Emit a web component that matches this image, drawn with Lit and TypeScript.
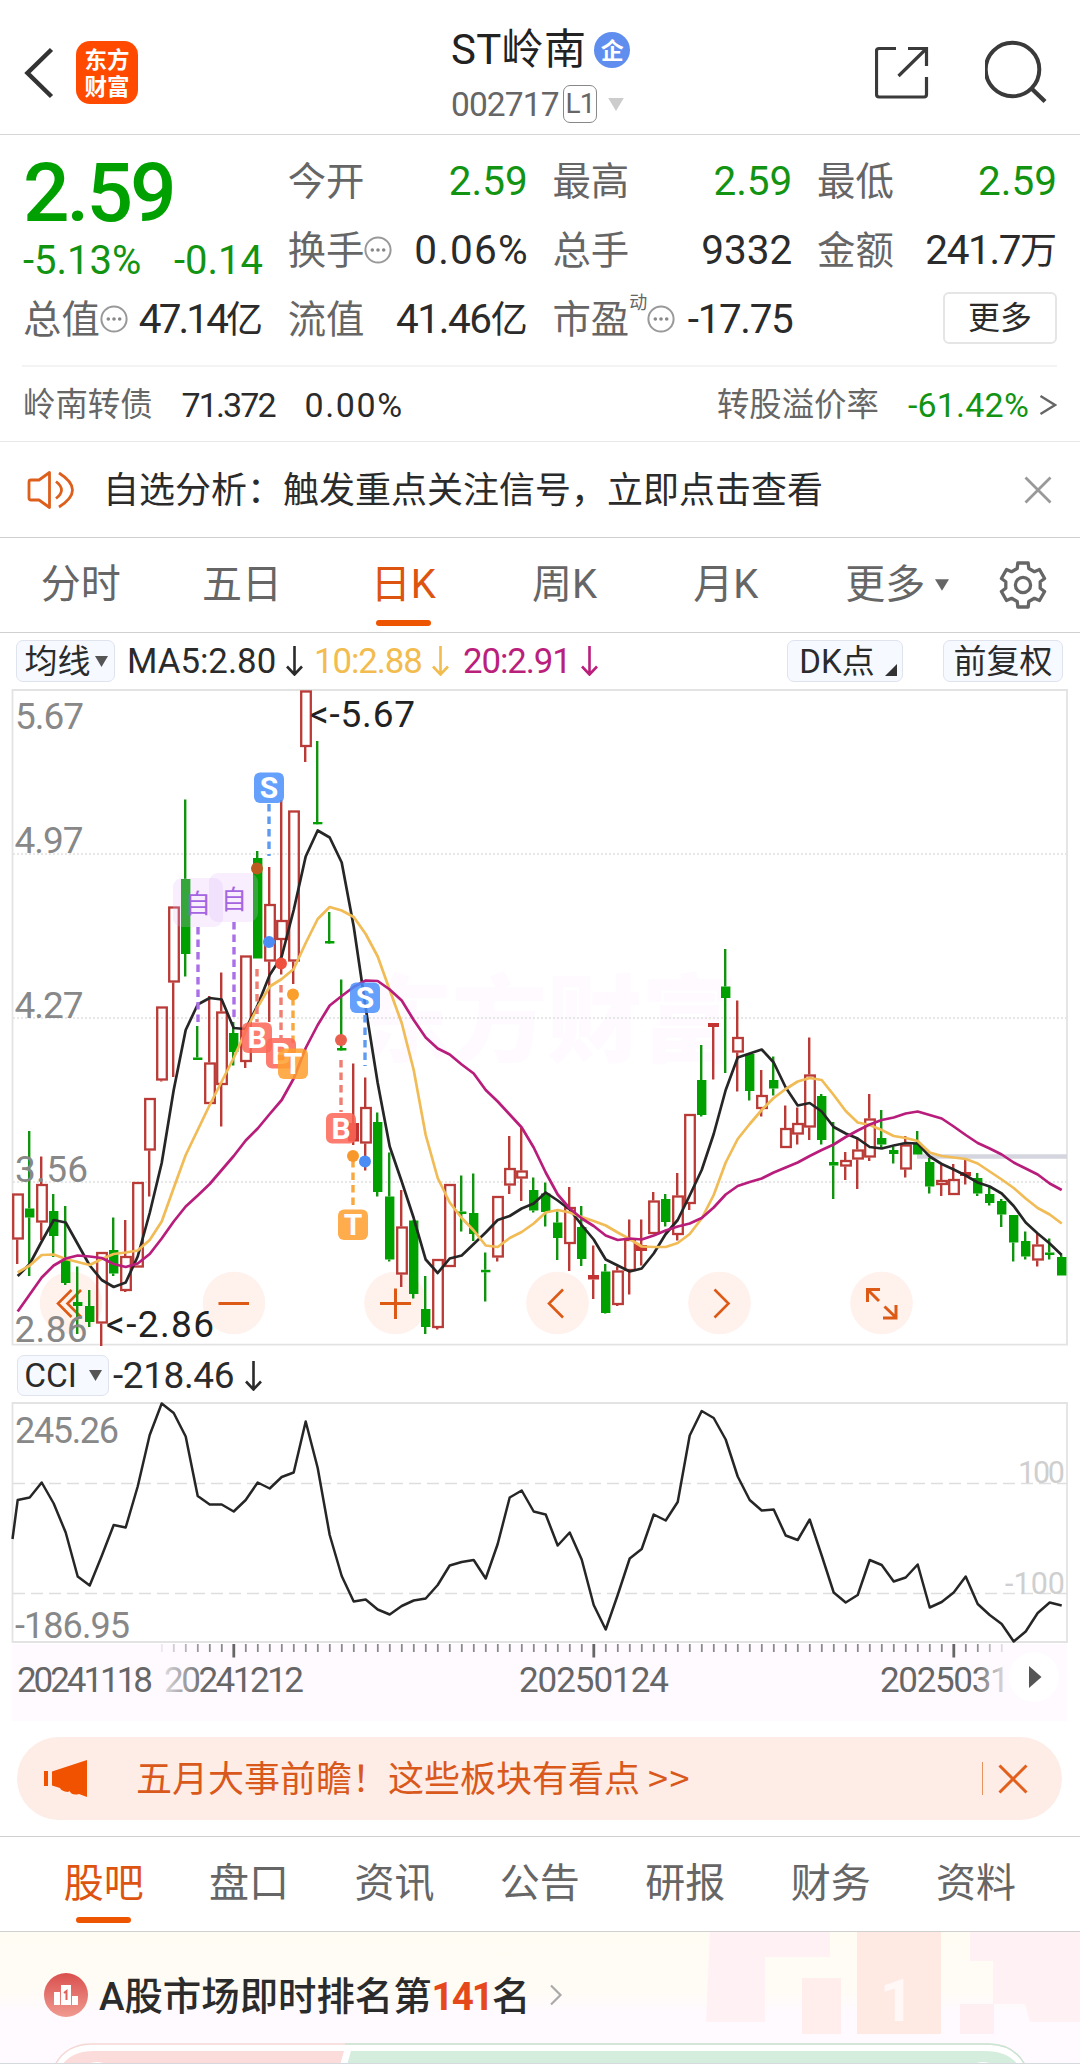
import { LitElement, html, svg, css } from "lit";
import { customElement } from "lit/decorators.js";
import { classMap } from "lit/directives/class-map.js";

const STEP = 12;
const X0 = 17.2;
const cx = (i: number) => X0 + STEP * i;

/* kind, body top, body bottom, high, low (R hollow, F solid red, G solid green) */
type Candle = [string, number, number, number, number];
const candles: Candle[] = [
  ["R", 1193.5, 1239.5, 1193.5, 1264], ["G", 1208.5, 1217.5, 1131, 1276], ["R", 1184, 1222.5, 1156.5, 1240],
  ["G", 1211, 1236, 1194, 1257], ["G", 1260, 1283, 1206, 1285], ["G", 1302, 1306, 1266.5, 1334],
  ["G", 1306, 1322, 1290, 1327], ["R", 1252, 1323.5, 1252, 1346], ["G", 1250, 1273.5, 1217.5, 1276],
  ["R", 1256, 1291, 1220, 1292], ["R", 1182, 1267.5, 1182, 1267.5], ["R", 1098, 1150.5, 1098, 1196.5],
  ["R", 1006.5, 1080.5, 1006.5, 1081.5], ["R", 906.5, 982.5, 906.5, 1077], ["G", 879, 954, 799.5, 976.5],
  ["G", 1057.5, 1060, 1026, 1060], ["R", 1062.5, 1104, 996, 1104], ["R", 1011.5, 1085, 972.5, 1126.5],
  ["G", 1033, 1052, 1022, 1065.5], ["R", 955.5, 1062, 955.5, 1068], ["G", 858, 958.5, 851, 958.5],
  ["R", 904, 961.5, 867, 1022], ["R", 920, 940, 800, 974.5], ["R", 810.5, 961.5, 810.5, 984],
  ["R", 690.5, 747, 690.5, 762], ["G", 822, 824.3, 741, 824], ["G", 941, 943.5, 912, 943],
  ["G", 1048, 1050.5, 979.5, 1050], ["F", 1123, 1141.5, 1063.5, 1145], ["R", 1107, 1143.5, 1077.5, 1170.5],
  ["G", 1122, 1192, 1112.5, 1196.5], ["G", 1196.5, 1259.5, 1152.5, 1261.5], ["R", 1226.5, 1274.5, 1190, 1287],
  ["G", 1220.5, 1294, 1220, 1298.5], ["G", 1309, 1327, 1276, 1334], ["R", 1259, 1328, 1259, 1329.5],
  ["R", 1184, 1267, 1184, 1267], ["G", 1211.5, 1214, 1175.5, 1231.5], ["G", 1213, 1234, 1173.5, 1241],
  ["G", 1269.8, 1272.3, 1252.5, 1301.5], ["R", 1196, 1257.5, 1196, 1261.5], ["R", 1168, 1185.5, 1136, 1194],
  ["R", 1170.5, 1178.5, 1127.5, 1201], ["G", 1190, 1210.5, 1177.5, 1212.5], ["G", 1193.5, 1212, 1182.5, 1226.5],
  ["G", 1222.5, 1238, 1211.5, 1260], ["R", 1207, 1244, 1187, 1271], ["G", 1227, 1259, 1206, 1266],
  ["F", 1275, 1279.5, 1245.5, 1299], ["G", 1271.5, 1313, 1264, 1313.5], ["R", 1270.5, 1305, 1266.5, 1306],
  ["R", 1239, 1271, 1219.5, 1294.5], ["F", 1245, 1251, 1219.5, 1265.5], ["R", 1200.5, 1234, 1192, 1234],
  ["G", 1199, 1222, 1194, 1226.5], ["R", 1195.5, 1235, 1173, 1240.5], ["R", 1114, 1204, 1114, 1210],
  ["G", 1080, 1115, 1045, 1116.5], ["F", 1023, 1027, 1023, 1079.5], ["G", 986.5, 998, 949, 1073],
  ["R", 1037, 1052.5, 1000.5, 1091.5], ["G", 1054, 1091, 1053, 1100.5], ["R", 1095, 1109, 1070, 1116.5],
  ["G", 1080, 1088.5, 1056.5, 1095.5], ["R", 1128, 1148, 1105.5, 1148], ["R", 1123, 1134.5, 1107.5, 1144.5],
  ["R", 1074.5, 1127.5, 1037.5, 1140], ["G", 1096, 1140, 1094, 1144.5], ["G", 1162, 1165.5, 1122, 1199],
  ["R", 1160, 1166.5, 1152, 1180], ["R", 1149.5, 1159.5, 1138, 1189], ["R", 1118.5, 1157.5, 1094, 1161],
  ["G", 1138, 1144.5, 1110, 1148], ["G", 1150, 1154, 1147, 1163.5], ["R", 1144.5, 1169.5, 1136, 1177.5],
  ["G", 1144, 1154.5, 1131, 1154.5], ["G", 1162, 1186.5, 1158, 1193.5], ["R", 1180, 1185, 1165, 1196],
  ["R", 1179, 1195, 1164, 1195], ["F", 1172, 1176, 1160, 1184.5], ["G", 1178, 1193.5, 1173, 1196],
  ["G", 1194, 1203, 1186.5, 1205.5], ["G", 1201, 1214.5, 1199, 1227], ["G", 1215, 1242.5, 1215, 1261.5],
  ["G", 1241, 1256.5, 1231.5, 1259.5], ["R", 1244.5, 1260.5, 1234, 1266.5], ["G", 1252.5, 1255, 1238.5, 1259.5],
  ["G", 1257, 1275.5, 1255, 1275.5],
];

const ma5 = [1276, 1264, 1241.5, 1220, 1222.5, 1244, 1265.5, 1280, 1287, 1282.5, 1256.5, 1213, 1163, 1090, 1030,
  1004.5, 998, 999.5, 1028, 1029, 1005, 975, 956.5, 910, 856.5, 830.5, 837.5, 862.5, 926.5, 1008, 1083, 1146.5,
  1181.5, 1218, 1259.5, 1273, 1258.5, 1255.5, 1244, 1232.5, 1220, 1216, 1208.5, 1203.5, 1192.5, 1200.5, 1209.5,
  1225, 1239.5, 1259.5, 1265.5, 1271.5, 1268.5, 1253.5, 1234, 1220, 1195.5, 1170, 1134, 1090, 1057.5, 1053.5,
  1049.5, 1062.5, 1087.5, 1105.5, 1103, 1111.5, 1127, 1133.5, 1138.5, 1147, 1148.5, 1145.5, 1143, 1143.5, 1156.5,
  1164, 1169.5, 1175.5, 1182.5, 1186.5, 1193.5, 1206, 1222.5, 1233.5, 1243.5, 1255];
const ma10 = [1272.5, 1265.5, 1255, 1254.5, 1259, 1262, 1265, 1259, 1254, 1252.5, 1250.5, 1240, 1221.5, 1188, 1155,
  1130, 1105, 1081.5, 1058, 1031, 1007, 986.5, 979, 969, 943, 919, 907, 910.5, 917, 934, 956.5, 990, 1023, 1070,
  1135, 1178, 1202.5, 1218, 1230.5, 1245.5, 1247, 1238, 1232, 1223.5, 1212.5, 1210, 1212.5, 1217, 1221, 1225.5,
  1232.5, 1239, 1246.5, 1247, 1247, 1243, 1234, 1218.5, 1195, 1162.5, 1139, 1124, 1110, 1098, 1089, 1081.5, 1078,
  1080, 1095, 1111, 1122.5, 1125, 1130, 1136, 1138, 1141, 1152.5, 1156, 1157.5, 1159, 1163.5, 1171.5, 1179.5,
  1188, 1198.5, 1208, 1214.5, 1223.5];
const ma20 = [1311.5, 1294.5, 1277.5, 1265.5, 1258.5, 1255.5, 1256.5, 1258, 1264, 1267, 1263.5, 1254, 1238.5,
  1221.5, 1206.5, 1195.5, 1184, 1170, 1156, 1140.5, 1128.5, 1114, 1100, 1078.5, 1048, 1025, 1005.5, 996, 987,
  980.5, 981, 989.5, 1000.5, 1020, 1037.5, 1048.5, 1054.5, 1064.5, 1073.5, 1090, 1101.5, 1114.5, 1127.5, 1147.5,
  1172.5, 1194.5, 1208.5, 1218.5, 1226, 1235.5, 1240, 1238.5, 1239.5, 1235.5, 1230.5, 1226.5, 1223.5, 1218,
  1207.5, 1194.5, 1186, 1182, 1178.5, 1172.5, 1167.5, 1162.5, 1156, 1150, 1144.5, 1137, 1130.5, 1124.5, 1120,
  1117.5, 1113.5, 1111.5, 1115, 1118.5, 1126.5, 1135, 1143, 1148.5, 1154.5, 1162.5, 1168.5, 1174.5, 1183.5, 1190];
const cci = [1500, 1497.5, 1482.5, 1503.5, 1532.5, 1576.5, 1585.5, 1556, 1525, 1527.5, 1486.5, 1435, 1403.5, 1413,
  1436.5, 1496, 1504.5, 1504.5, 1511.5, 1500, 1482.5, 1488.5, 1477, 1472.5, 1421.5, 1468, 1535, 1576, 1601.5,
  1599.5, 1609.5, 1614.5, 1606, 1600.5, 1598.5, 1585, 1565.5, 1562, 1560, 1578.5, 1544, 1497.5, 1490.5, 1511.5,
  1514.5, 1545.5, 1532.5, 1559.5, 1605, 1629.5, 1595, 1558.5, 1549, 1514.5, 1520.5, 1502, 1435.5, 1411, 1418,
  1439.5, 1476.5, 1500, 1510.5, 1509.5, 1535.5, 1540, 1519.5, 1555.5, 1592.5, 1602.5, 1595, 1560, 1565, 1581.5,
  1577.5, 1564.5, 1607.5, 1602, 1592.5, 1576.5, 1604, 1615, 1624, 1641.5, 1631.5, 1613, 1602.5, 1605.5];

const line = (ys: number[]) => ys.map((y, i) => `${cx(i) + 0.5},${y}`).join(" ");

const arrow = () => html`<svg class="arrow" width="17" height="30" viewBox="0 0 17 30">
  <path d="M8.5 0V28M1 20.5L8.5 28.5L16 20.5" fill="none" stroke="currentColor" stroke-width="2.6" /></svg>`;
const tri = (c: string) => html`<svg class=${c} viewBox="0 0 12 10"><path d="M0 0H12L6 10Z" fill="currentColor" /></svg>`;
const more = () => html`<svg class="dots" width="28" height="28" viewBox="0 0 28 28">
  <circle cx="14" cy="14" r="12.6" fill="none" stroke="#999" stroke-width="2" />
  <circle cx="8.3" cy="14" r="1.8" fill="#888" /><circle cx="14" cy="14" r="1.8" fill="#888" /><circle cx="19.7" cy="14" r="1.8" fill="#888" /></svg>`;

@customElement("app-root")
export class AppRoot extends LitElement {
  static styles = css`
    :host { display: block; width: 1080px; height: 2064px; overflow: hidden; background: #fff; color: #2b2b2b;
      font-family: Roboto, "Noto Sans CJK SC", sans-serif; }
    * { box-sizing: border-box; }
    svg { display: block; flex: none; }
    .page { display: flex; flex-direction: column; }
    .header { height: 135px; border-bottom: 1px solid #d6d6d6; display: grid; grid-template-columns: 451px 1fr 205px; }
    .left { display: flex; align-items: flex-start; padding: 41px 0 0 24px; gap: 22px; }
    .back { margin-top: 6px; }
    .logo { width: 62px; height: 63px; border-radius: 14px; background: #ff4a00; color: #fff; font: 700 22.5px/27px "Noto Sans CJK SC", sans-serif;
      display: flex; flex-direction: column; justify-content: center; align-items: center; padding-bottom: 2px; }
    .mid { display: flex; flex-direction: column; }
    .name { display: flex; align-items: center; height: 54px; margin-top: 23px; font-size: 42px; line-height: 54px; gap: 8px; color: #222; }
    .name .t { letter-spacing: 0.3px; }
    .ent { width: 36px; height: 36px; border-radius: 50%; background: #5f8eee; color: #fff; font: 700 23px/35px "Noto Sans CJK SC", sans-serif; text-align: center; }
    .code { display: flex; align-items: center; height: 40px; margin-top: 7px; font-size: 33.5px; color: #666; }
    .code .n { letter-spacing: -0.9px; width: 112px; }
    .l1 { width: 34px; height: 38px; border: 1.6px solid #888; border-radius: 7px; font-size: 28px; line-height: 35px; text-align: center; letter-spacing: -1px; }
    .t1 { width: 20px; height: 13px; color: #ccc; margin-left: 9px; }
    .right { display: flex; padding: 40px 0 0; gap: 56px; }

    .quote { height: 307px; border-bottom: 1px solid #e8e8e8; padding: 11px 23px 0 23px; }
    .grid { height: 219px; display: grid; grid-template-columns: repeat(4, 240px); grid-template-rows: 69px 69px 69px; column-gap: 24.7px; font-size: 40.5px; line-height: 70px; }
    .price { grid-row: 1 / 3; color: #00a000; }
    .big { font-size: 82px; font-weight: 500; line-height: 90px; margin-top: 2px; letter-spacing: -3px; height: 90px; }
    .chg { display: flex; justify-content: space-between; line-height: 46px; color: #129412; font-size: 40px; }
    .cell { display: flex; align-items: baseline; justify-content: space-between; white-space: nowrap; }
    .k { font-size: 38.4px; color: #666; display: flex; align-items: baseline; }
    .dots { align-self: center; margin-top: -3px; }
    .sup { font-size: 18px; line-height: 20px; align-self: flex-start; margin-top: 8px; }
    .green { color: #129412; }
    .wide { letter-spacing: 1.2px; margin-right: -1.2px; }
    .tight { letter-spacing: -1.4px; }
    .tighter { letter-spacing: -2.9px; }
    .unit { font-size: 37px; letter-spacing: 0; }
    .morebtn { justify-self: end; width: 114px; height: 52px; border: 2px solid #e5e5e5; border-radius: 6px; font-size: 32px; line-height: 48px; text-align: center; margin-top: 8px; }
    .bond { border-top: 2px solid #f3f3f3; margin-left: -1px; height: 74px; display: flex; align-items: center; font-size: 34px; padding: 3px 0 0 1px; line-height: 60px; }
    .bond .lab { font-size: 32.4px; color: #666; }
    .bond .a { margin-left: 29px; width: 123px; letter-spacing: -1.9px; }
    .bond .b { letter-spacing: 1.6px; }
    .bond .r { margin-left: auto; }
    .bond .g { margin: 0 10px 0 29px; letter-spacing: 0.2px; }

    .notice { height: 96px; border-bottom: 1px solid #d0d0d0; display: flex; align-items: center; padding: 0 28px 0 27px; font-size: 36px; }
    .notice .txt { margin: -5px 0 0 28px; flex: 1; font-family: "Noto Sans CJK SC", sans-serif; line-height: 60px; }
    .ktabs { height: 95px; border-bottom: 1px solid #d0d0d0; display: grid; grid-template-columns: repeat(5, 161.3px) 1fr 114px; font-size: 40px; line-height: 94px; color: #666; }
    .tab { display: flex; justify-content: center; align-items: center; position: relative; }
    .tab.on { color: #dd5410; }
    .tab.on::after { content: ""; position: absolute; left: 50%; bottom: 6px; width: 55px; height: 6px; border-radius: 3px; margin-left: -27.5px; background: #ee5500; }
    .btabs .tab.on::after { bottom: 8px; }
    .tmore { padding-left: 22px; }
    .t2 { width: 14px; height: 12px; margin-left: 10px; }
    .ma { height: 56px; display: flex; align-items: center; padding: 0 17px 0 16px; font-size: 34.8px; line-height: 50px; }
    .chip { height: 42px; border: 1.5px solid #dfe3ee; border-radius: 7px; background: #f6f9ff; font-size: 33px; line-height: 39px; display: flex; align-items: center; justify-content: center; white-space: nowrap; }
    .avg { width: 99px; padding-left: 1px; }
    .t3 { width: 13px; height: 11px; color: #555; margin-left: 4px; }
    .m { display: flex; align-items: center; gap: 10px; }
    .m5 { margin-left: 12px; width: 187px; }
    .m10 { color: #f2bc4f; width: 149px; }
    .m20 { color: #ba1f7c; }
    .m10, .m20 { letter-spacing: -1.1px; }
    .dk { width: 116px; margin-left: auto; gap: 10px; padding-left: 6px; }
    .dk svg { align-self: flex-end; margin-bottom: 5px; }
    .fq { width: 120px; margin-left: 40px; }

    .ccirow { height: 55px; display: flex; align-items: center; padding: 2px 17px 0; font-size: 37px; letter-spacing: -0.4px; }
    .ccichip { width: 92px; height: 41px; letter-spacing: 0; gap: 8px; margin-right: 4px; font-size: 33.5px; }
    .ccirow .arrow { margin-left: 11px; }
    text { font-family: Roboto, "Noto Sans CJK SC", sans-serif; }

    .banner { height: 83px; margin: 16px 18px 16px 17px; border-radius: 42px; background: #feede6; display: flex; align-items: center; padding: 0 34px 0 27px; color: #d9581b; font-size: 36px; }
    .banner .txt { margin: -5px 0 0 48px; flex: 1; line-height: 60px; font-family: "Noto Sans CJK SC", sans-serif; }
    .gt { letter-spacing: 1.5px; }
    .bar { width: 1.5px; height: 33px; background: #e8935f; margin-right: 15px; }
    .btabs { height: 96px; border-top: 1px solid #d0d0d0; border-bottom: 1px solid #d0d0d0; padding: 0 31px; display: grid; grid-template-columns: repeat(7, 145.4px); font-size: 40px; line-height: 94px; color: #666; }
    .rank { height: 133px; background: linear-gradient(#fffcf4 0, #fffcf6 45%, #fefaff 60%); display: grid; }
    .rank > * { grid-area: 1 / 1; }
    .rk { display: flex; align-items: center; height: 126px; padding-left: 44px; font-size: 38.4px; font-weight: 500; white-space: nowrap; }
    .rk .rt { margin: -5px 19px 0 11px; }
    .red { color: #e4481b; font-weight: 700; letter-spacing: -2px; font-size: 38.5px; }
  `;

  private label(x: number, y: number, t: string, w: number, size = 37, fill = "#888") {
    return svg`<text x=${x} y=${y} font-size=${size} fill=${fill} textLength=${w} lengthAdjust="spacing">${t}</text>`;
  }

  private candle([k, t, b, h, l]: Candle, i: number) {
    const x = cx(i);
    const c = k === "G" ? "#00a000" : "#b93a36";
    const fill = k === "G" ? "#00a000" : k === "F" ? "#c23331" : "none";
    return svg`
      <path d="M${x} ${h}V${t}M${x} ${b}V${l}" stroke=${k === "G" ? "#109410" : c} stroke-width="2.4" />
      ${k === "R"
        ? svg`<rect x=${x - 4} y=${t + 1} width="9.6" height=${Math.max(b - t - 2, 1)} fill="none" stroke=${c} stroke-width="2.3" />`
        : svg`<rect x=${x - (k === "F" ? 5.2 : 4.2)} y=${t} width=${k === "F" ? 11 : 9.4} height=${b - t} fill=${fill} />`}`;
  }

  private mark(x: number, y: number, t: string, fill: string) {
    return svg`<rect x=${x} y=${y} width="30" height="30.5" rx="6" fill=${fill} fill-opacity="0.85" />
      <text x=${x + 15} y=${y + 25.5} font-size="30" font-weight="700" text-anchor="middle" fill="#fff">${t}</text>`;
  }

  private dash(x: number, a: number, b: number, c: string) {
    return svg`<path d="M${x} ${a}V${b}" stroke=${c} stroke-width="3.4" stroke-dasharray="7.5 5" />`;
  }

  private chart() {
    const circles = [71, 234, 395.5, 557.5, 719.5, 881.5];
    return html`<svg width="1080" height="658" viewBox="0 689 1080 658">
      <text x="357" y="1055" font-size="95" font-weight="900" fill="#fefaff">东方财富</text>
      ${[854, 1018, 1182].map((y) => svg`<path d="M13 ${y}H1067" stroke="#dfdfdf" stroke-width="1.3" stroke-dasharray="2 2" />`)}
      <path d="M12.5 690H1067V1344.7H12.5Z" fill="none" stroke="#e3e3e3" stroke-width="1.8" />
      ${circles.map((x) => svg`<circle cx=${x} cy="1303" r="31.3" fill="#fff1ec" />`)}
      <g fill="none" stroke="#dc5a16" stroke-width="2.6">
        <path d="M71.5 1290L58 1303.5L71.5 1317M81 1290L67.5 1303.5L81 1317" />
        <path d="M218.5 1303.5H249M380 1303.5H411M395.5 1288.5V1319" stroke-width="3" />
        <path d="M563 1289.5L549 1303.5L563 1317.5M714.5 1289.5L728.5 1303.5L714.5 1317.5" />
        <path d="M867.5 1302V1289.5H880M868 1290L879 1301M884.5 1306.5L896 1317.5M896 1305V1318H883" stroke-width="3" />
      </g>
      <path d="M917 1156.5H1067" stroke="#d4d5de" stroke-width="4.6" />
      ${this.label(15, 729, "5.67", 69)}${this.label(14.5, 853, "4.97", 69)}${this.label(14.5, 1017.5, "4.27", 69)}
      ${candles.map((c, i) => this.candle(c, i))}
      ${this.label(15, 1182, "3.56", 73)}${this.label(14.5, 1341.5, "2.86", 73)}
      <rect x="173" y="878" width="50" height="49" rx="9" fill="#e2b8fb" fill-opacity="0.24" />
      <rect x="209" y="873" width="49" height="49" rx="9" fill="#e2b8fb" fill-opacity="0.24" />
      <g fill="none" stroke-width="2.7" stroke-linejoin="round">
        <polyline points=${line(ma5)} stroke="#262626" />
        <polyline points=${line(ma10)} stroke="#f1bb55" />
        <polyline points=${line(ma20)} stroke="#b81d7b" />
      </g>
      <text x="198" y="912.5" font-size="26" text-anchor="middle" fill="#a565e2">自</text>
      <text x="234" y="908.5" font-size="26" text-anchor="middle" fill="#a565e2">自</text>
      ${this.dash(198, 927, 1026, "#ab6fe8")}${this.dash(234, 922, 1022, "#ab6fe8")}
      ${this.dash(269, 804, 856, "#5c9bf0")}${this.dash(365, 1015, 1066, "#5c9bf0")}
      ${this.dash(257, 969, 1022, "#ee7f72")}${this.dash(281, 985, 1038, "#ee7f72")}${this.dash(341, 1060, 1112, "#ee7f72")}
      ${this.dash(293, 998, 1048, "#f8a83e")}${this.dash(353, 1160, 1208, "#f8a83e")}
      <circle cx="257" cy="868.5" r="6" fill="#bd5a20" /><circle cx="269" cy="942" r="6" fill="#4c8df5" />
      <circle cx="281" cy="963.5" r="6" fill="#f0513f" /><circle cx="293" cy="994.5" r="6" fill="#fb9f2c" />
      <circle cx="341" cy="1040" r="6" fill="#e8614e" /><circle cx="353" cy="1156" r="6" fill="#f8982c" />
      <circle cx="365" cy="1161.5" r="6" fill="#4c8df5" />
      ${this.mark(254, 772.5, "S", "#4a90fb")}${this.mark(350, 982.5, "S", "#4a90fb")}
      ${this.mark(242, 1022.5, "B", "#fb6656")}${this.mark(266, 1038, "B", "#fb6656")}${this.mark(278, 1048.5, "T", "#ff9e2e")}
      ${this.mark(326, 1113, "B", "#fb6656")}${this.mark(338, 1209.5, "T", "#ff9e2e")}
      ${this.label(310, 727, "<-5.67", 105, 37, "#222")}${this.label(106, 1336.5, "<-2.86", 108, 37, "#222")}
    </svg>`;
  }

  private cciChart() {
    return html`<svg width="1080" height="242" viewBox="0 1402 1080 242">
      <path d="M12.5 1403H1067V1642H12.5Z" fill="none" stroke="#e3e3e3" stroke-width="1.8" />
      <path d="M13 1483.5H1067M13 1593.5H1067" stroke="#dedede" stroke-width="1.6" stroke-dasharray="12 6" />
      ${this.label(15, 1442.5, "245.26", 104, 36)}${this.label(15, 1637.5, "-186.95", 115, 36)}
      ${this.label(1018, 1483, "100", 47, 30.5, "#cfcfcf")}${this.label(1005, 1594, "-100", 60, 30.5, "#cfcfcf")}
      <polyline points=${"12.5,1539 " + line(cci)} fill="none" stroke="#262626" stroke-width="2.5" stroke-linejoin="round" />
    </svg>
    <svg width="1080" height="77" viewBox="0 1644 1080 77">
      <defs>
        <linearGradient id="fl"><stop offset="0" stop-color="#fefaff" /><stop offset="1" stop-color="#fefaff" stop-opacity="0" /></linearGradient>
        <linearGradient id="fr"><stop offset="0" stop-color="#fefaff" stop-opacity="0" /><stop offset="1" stop-color="#fefaff" /></linearGradient>
      </defs>
      <rect x="12" y="1644" width="1055" height="77" fill="#fefaff" />
      ${Array.from({ length: 71 }, (_, n) => n + 12).map((i) => {
        const major = i % 30 === 18;
        return svg`<path d="M${cx(i) + 0.6} 1644V${major ? 1657.5 : 1652}" stroke=${major ? "#666" : "#8a8a8a"} stroke-width=${major ? 2.8 : 1.8} />`;
      })}
      ${this.label(164, 1691.5, "20241212", 140, 35, "#666")}${this.label(519, 1691.5, "20250124", 150, 35, "#666")}
      ${this.label(880, 1691.5, "20250311", 148, 35, "#666")}
      <rect x="153" y="1644" width="52" height="60" fill="url(#fl)" />
      <rect x="975" y="1644" width="37" height="60" fill="url(#fr)" /><rect x="1011" y="1644" width="56" height="60" fill="#fefaff" />
      ${this.label(17, 1691.5, "20241118", 136, 35, "#666")}
      <circle cx="1034" cy="1677" r="25" fill="#fff" />
      <path d="M1029 1666V1688L1041.5 1677Z" fill="#555" />
    </svg>`;
  }

  private gear() {
    const pts: string[] = [];
    for (let n = 0; n < 6; n++) {
      const a = (n * Math.PI) / 3 - Math.PI / 2;
      for (const [d, r] of [[-0.34, 17.5], [-0.23, 22.6], [0.23, 22.6], [0.34, 17.5]]) {
        pts.push(`${(25 + r * Math.cos(a + d)).toFixed(1)},${(25 + r * Math.sin(a + d)).toFixed(1)}`);
      }
    }
    return html`<svg width="50" height="50" viewBox="0 0 50 50"><g fill="none" stroke="#666" stroke-width="3.3" stroke-linejoin="round">
      <polygon points=${pts.join(" ")} /><circle cx="25" cy="25" r="7.6" /></g></svg>`;
  }

  private tab(t: string, on: boolean) {
    return html`<div class=${classMap({ tab: true, on })}>${t}</div>`;
  }

  render() {
    return html`<div class="page">
      <div class="header">
        <div class="left">
          <svg class="back" width="30" height="52" viewBox="0 0 30 52"><path d="M27.5 2.5L3.500 26L27.5 49.5" fill="none" stroke="#333" stroke-width="4.5" /></svg>
          <div class="logo"><span>东方</span><span>财富</span></div>
        </div>
        <div class="mid">
          <div class="name"><span class="t">ST岭南</span><span class="ent">企</span></div>
          <div class="code"><span class="n">002717</span><span class="l1">L1</span>${tri("t1")}</div>
        </div>
        <div class="right">
          <svg width="54" height="62" viewBox="0 0 54 62"><path d="M21 8.5H4Q1.5 8.5 1.5 11V54Q1.5 57 4 57H49Q51.5 57 51.5 54.5V37M33 8.5H51.5V26M51 9L23.5 36" fill="none" stroke="#3a3a3a" stroke-width="3.2" /></svg>
          <svg width="66" height="66" viewBox="0 0 66 66"><circle cx="27.5" cy="29.5" r="26.800" fill="none" stroke="#3a3a3a" stroke-width="4" /><path d="M46 48L60 61.5" stroke="#3a3a3a" stroke-width="4.400" /></svg>
        </div>
      </div>

      <div class="quote">
        <div class="grid">
          <div class="price"><div class="big">2.59</div><div class="chg"><span>-5.13%</span><span>-0.14</span></div></div>
          <div class="cell"><span class="k">今开</span><span class="green">2.59</span></div>
          <div class="cell"><span class="k">最高</span><span class="green">2.59</span></div>
          <div class="cell"><span class="k">最低</span><span class="green">2.59</span></div>
          <div class="cell"><span class="k">换手${more()}</span><span class="wide">0.06%</span></div>
          <div class="cell"><span class="k">总手</span><span>9332</span></div>
          <div class="cell"><span class="k">金额</span><span class="tight">241.7<span class="unit">万</span></span></div>
          <div class="cell"><span class="k">总值${more()}</span><span class="tighter">47.14<span class="unit">亿</span></span></div>
          <div class="cell"><span class="k">流值</span><span class="tight">41.46<span class="unit">亿</span></span></div>
          <div class="cell"><span class="k">市盈<span class="sup">动</span>${more()}</span><span class="tight">-17.75</span></div>
          <div class="morebtn">更多</div>
        </div>
        <div class="bond">
          <span class="lab">岭南转债</span><span class="a">71.372</span><span class="b">0.00%</span>
          <span class="lab r">转股溢价率</span><span class="g green">-61.42%</span>
          <svg width="18" height="22" viewBox="0 0 18 22"><path d="M1.5 2L16 11L1.5 20" fill="none" stroke="#666" stroke-width="2.4" /></svg>
        </div>
      </div>

      <div class="notice">
        <svg width="48" height="40" viewBox="0 0 48 40"><g fill="none" stroke="#dd5f1c" stroke-width="2.800" stroke-linejoin="round">
          <path d="M22.5 2.5V37.5L12 30H4Q2 30 2 28V12Q2 10 4 10H12Z" /><path d="M29 11.5Q40 20 29 28.5M32 3Q59 20 32 37" /></g></svg>
        <span class="txt">自选分析：触发重点关注信号，立即点击查看</span>
        <svg width="28" height="28" viewBox="0 0 28 28"><path d="M1.5 1.5L26.5 26.5M26.5 1.5L1.5 26.5" stroke="#999" stroke-width="2.8" /></svg>
      </div>

      <div class="ktabs">
        ${["分时", "五日", "日K", "周K", "月K"].map((t) => this.tab(t, t === "日K"))}
        <div class="tab tmore">更多${tri("t2")}</div>
        <div class="tab">${this.gear()}</div>
      </div>

      <div class="ma">
        <div class="chip avg">均线${tri("t3")}</div>
        <div class="m m5"><span>MA5:2.80</span>${arrow()}</div>
        <div class="m m10"><span>10:2.88</span>${arrow()}</div>
        <div class="m m20"><span>20:2.91</span>${arrow()}</div>
        <div class="chip dk">DK点<svg width="12" height="12" viewBox="0 0 12 12"><path d="M12 0V12H0Z" fill="#333" /></svg></div>
        <div class="chip fq">前复权</div>
      </div>
      ${this.chart()}
      <div class="ccirow"><div class="chip ccichip">CCI ${tri("t3")}</div>-218.46${arrow()}</div>
      ${this.cciChart()}

      <div class="banner">
        <svg width="44" height="38" viewBox="0 0 44 38"><g fill="#f05200"><rect x="0" y="11" width="4" height="15" /><path d="M43 0V37L35 34Q28 36 25.5 31L24 32Q17 31 16 28L8 25.5V11.5Z" /></g></svg>
        <span class="txt">五月大事前瞻！这些板块有看点 <span class="gt">&gt;&gt;</span></span>
        <span class="bar"></span>
        <svg width="30" height="30" viewBox="0 0 30 30"><path d="M1.5 1.5L28.5 28.5M28.5 1.5L1.5 28.5" stroke="#e2601e" stroke-width="3" /></svg>
      </div>

      <div class="btabs">${["股吧", "盘口", "资讯", "公告", "研报", "财务", "资料"].map((t) => this.tab(t, t === "股吧"))}</div>

      <div class="rank">
        <svg width="1080" height="133" viewBox="0 1931 1080 133">
          <path d="M710 1931H830V1956H765V2021H706Z" fill="#fff1f4" /><path d="M970 1931H1080V2021H1030L1025 2003H993V1960H970Z" fill="#fff1f4" />
          <rect x="857" y="1931" width="84" height="102" fill="#ffe9e3" /><rect x="802" y="1977" width="39" height="56" fill="#ffeeec" />
          <rect x="960" y="2003" width="34" height="30" fill="#ffeff2" />
          <text x="897" y="2020" font-size="60" font-weight="700" text-anchor="middle" fill="#fff8f6">1</text>
          <path d="M55 2064Q66 2043 92 2043H988Q1014 2043 1025 2064" fill="#fff" stroke="#f5d8d4" stroke-width="1.5" />
          <path d="M345 2043H988Q1014 2043 1025 2064" fill="none" stroke="#c8e6d4" stroke-width="1.5" />
          <path d="M62 2064Q72 2050 94 2050H344L340 2064Z" fill="#fcdcda" /><path d="M351 2050H984Q1008 2050 1018 2064H347Z" fill="#d5eddc" />
          <path d="M86 2064Q97 2058 108 2064ZM972 2064Q983 2058 994 2064Z" fill="#fff" />
          <path d="M0 2062.5H1080" stroke="#d5d8dc" stroke-width="1.2" />
        </svg>
        <div class="rk">
          <svg width="44" height="44" viewBox="0 0 44 44"><defs><linearGradient id="rg" x2="0" y2="1"><stop offset="0" stop-color="#d9504e" /><stop offset="1" stop-color="#f09a90" /></linearGradient></defs>
            <circle cx="22" cy="22" r="22" fill="url(#rg)" /><path d="M10 19H16V32H10ZM17 12H27V32H17ZM28 23H34V32H28Z" fill="#fff" /><path d="M20 20L22.5 18V27" stroke="#e0605c" stroke-width="2" fill="none" /></svg>
          <span class="rt">A股市场即时排名第<span class="red">141</span>名</span>
          <svg width="14" height="22" viewBox="0 0 14 22"><path d="M2 1.5L11.5 11L2 20.500" fill="none" stroke="#aaa" stroke-width="2.2" /></svg>
        </div>
      </div>
    </div>`;
  }
}
